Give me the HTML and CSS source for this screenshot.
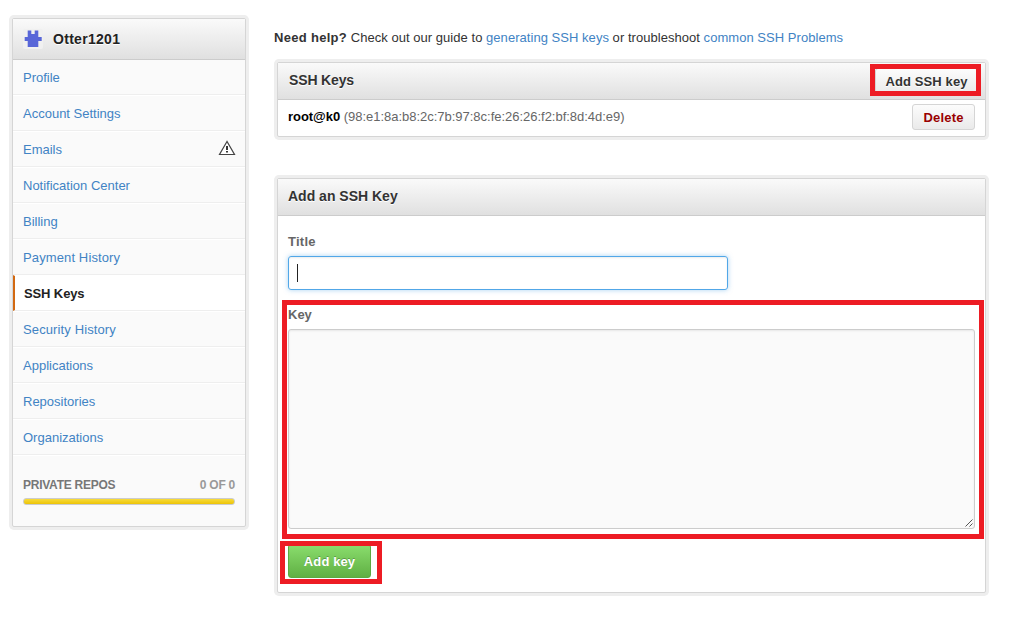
FILE: index.html
```html
<!DOCTYPE html>
<html lang="en">
<head>
<meta charset="utf-8">
<title>SSH Keys</title>
<link rel="stylesheet" href="styles.css">
</head>
<body>
<div class="page">
  <aside class="panel sidebar">
    <h2 class="user">
      <svg class="avatar" width="20" height="20" viewBox="0 0 20 20"><rect width="20" height="20" rx="2" fill="#f0f0f0"/><path d="M4.700 1.500h3.600V5h3.400V1.500h3.600V8h3.400v4h-3.400v6H4.700v-6h-3V8h3z" fill="#5866d8"/></svg>
      <span>Otter1201</span>
    </h2>
    <nav class="menu">
      <a>Profile</a>
      <a>Account Settings</a>
      <a>Emails <svg class="warn" width="18" height="16" viewBox="0 0 18 16"><path d="M9 1.500L1.500 14.500h15z" fill="#fff" stroke="#444" stroke-width="1.200"/><path d="M8 6h2v4H8zM8 11h2v1.500H8z" fill="#333"/></svg></a>
      <a>Notification Center</a>
      <a>Billing</a>
      <a class="payment">Payment History</a>
      <a class="selected">SSH Keys</a>
      <a class="security">Security History</a>
      <a>Applications</a>
      <a>Repositories</a>
      <a>Organizations</a>
    </nav>
    <div class="usage">
      <div class="usage-row"><b class="repos">PRIVATE REPOS</b><span class="count">0 OF 0</span></div>
      <div class="bar"></div>
    </div>
  </aside>
  <main class="main">
    <p class="help"><b>Need help?</b> Check out our guide to <a>generating SSH keys</a> or troubleshoot <a>common SSH Problems</a></p>
    <section class="panel keys">
      <header class="head"><h3 class="keys-title">SSH Keys</h3><span class="button add-ssh">Add SSH key<i class="mark mark-ssh"></i></span></header>
      <div class="key-row">
        <div><b class="key-name">root@k0</b> <span class="print">(98:e1:8a:b8:2c:7b:97:8c:fe:26:26:f2:bf:8d:4d:e9)</span></div>
        <span class="button delete">Delete</span>
      </div>
    </section>
    <section class="panel add">
      <header class="head"><h3 class="add-title">Add an SSH Key</h3></header>
      <div class="form">
        <label class="title-label">Title</label>
        <div class="input"><i class="caret"></i></div>
        <div class="key-field">
          <label>Key</label>
          <div class="textarea"><svg class="grip" width="8" height="8" viewBox="0 0 8 8"><path d="M.5 7.500l7-7M4.500 7.500l3-3" stroke="#555" fill="none"/></svg></div>
          <i class="mark mark-key"></i>
        </div>
        <div class="submit"><span class="primary">Add key</span><i class="mark mark-submit"></i></div>
      </div>
    </section>
  </main>
</div>
</body>
</html>
```
FILE: styles.css
```css
* { box-sizing: border-box; }
body { margin: 0; background: #fff; color: #333; font: 13px/18px "Liberation Sans", Arial, sans-serif; }
h2, h3, p { margin: 0; font-size: 14px; }
a { color: #4183c4; }
.page { display: flex; align-items: flex-start; gap: 31px; width: 986px; height: 627px; padding: 18px 0 0 12px; }
.panel { border: 1px solid #d5d5d5; border-radius: 2px; box-shadow: 0 0 0 3px #eee; background: #fff; }
.sidebar { flex: none; width: 234px; height: 509px; background: #fafafa; }
.user { display: flex; align-items: center; gap: 10px; height: 41px; padding-left: 10px; border-bottom: 1px solid #ccc; background: linear-gradient(#fafafa, #e0e0e0); color: #222; letter-spacing: .3px; text-shadow: 0 1px 0 #fff; }
.menu a { display: flex; align-items: center; justify-content: space-between; height: 36px; padding: 1px 10px 0; border-top: 1px solid #fff; border-bottom: 1px solid #eee; }
.menu a:first-child { height: 35px; border-top: 0; }
.menu a.payment, .menu a.security { letter-spacing: .12px; }
.menu a.selected { padding-left: 9px; border-left: 2px solid #d26911; background: #fff; color: #222; font-weight: bold; letter-spacing: -.12px; }
.warn { margin: -3px -1px 0 0; }
.usage { padding: 20px 10px 0; border-top: 1px solid #fff; font-size: 12px; }
.usage-row { display: flex; justify-content: space-between; color: #999; }
.repos { color: #777; letter-spacing: -.25px; }
.count { font-weight: bold; letter-spacing: -.25px; }
.bar { height: 7px; margin-top: 4px; border: 1px solid #ccc; border-radius: 3px; background: linear-gradient(#f7db3b, #edc407); }
.main { flex: 1; width: 709px; padding-top: 11px; }
.help { margin-left: -3px; margin-bottom: 15px; font-size: 13px; white-space: nowrap; letter-spacing: .04px; }
.help b { letter-spacing: .3px; }
.keys { width: 709px; height: 75px; }
.head { display: flex; align-items: center; justify-content: space-between; height: 37px; padding: 0 7px 0 10px; border-bottom: 1px solid #ccc; background: linear-gradient(#fafafa, #e0e0e0); text-shadow: 0 1px 0 #fff; }
.head h3 { padding-bottom: 2px; }
.head .keys-title { padding-left: 1px; letter-spacing: -.15px; }
.button { position: relative; display: flex; align-items: center; justify-content: center; height: 26px; padding-top: 2px; border: 1px solid #d5d5d5; border-radius: 3px; background: linear-gradient(#fcfcfc, #eaeaea); font-weight: bold; }
.add-ssh { width: 103px; letter-spacing: .12px; }
.mark { position: absolute; border: 5px solid #ed1c24; }
.mark-ssh { left: -6px; top: -5px; width: 111px; height: 32px; }
.key-row { display: flex; justify-content: space-between; padding: 4px 10px 0; color: #666; white-space: nowrap; }
.key-row > div { padding-top: 4px; }
.key-name { color: #000; letter-spacing: -.05px; }
.print { letter-spacing: -.02px; }
.delete { width: 63px; color: #900; letter-spacing: .2px; }
.add { width: 709px; height: 415px; margin-top: 41px; }
.form { display: flex; flex-direction: column; padding: 17px 10px 0; }
.form label { display: block; color: #666; font-weight: bold; }
.form .title-label { letter-spacing: .25px; }
.input { width: 440px; height: 34px; margin-top: 5px; padding: 7px 8px; border: 1px solid #51a7e8; border-radius: 3px; box-shadow: inset 0 1px 2px rgba(0,0,0,.075), 0 0 5px rgba(81,167,232,.5); }
.caret { display: block; width: 1px; height: 18px; background: #222; }
.key-field { position: relative; margin-top: 16px; }
.textarea { display: flex; align-items: flex-end; justify-content: flex-end; width: 687px; height: 200px; margin-top: 5px; padding: 1px; border: 1px solid #ccc; border-radius: 3px; background: #fafafa; box-shadow: inset 0 1px 2px rgba(0,0,0,.075); }
.mark-key { left: -6px; top: -6px; width: 702px; height: 239px; }
.submit { position: relative; display: flex; margin-top: 15px; }
.primary { width: 83px; height: 34px; border: 1px solid #5ca941; border-radius: 3px; background: linear-gradient(#8add6d, #60b044); color: #fff; font-weight: bold; line-height: 33px; text-align: center; text-shadow: 0 -1px 0 rgba(0,0,0,.25); letter-spacing: .1px; }
.mark-submit { left: -8px; top: -3px; width: 102px; height: 43px; }
```
